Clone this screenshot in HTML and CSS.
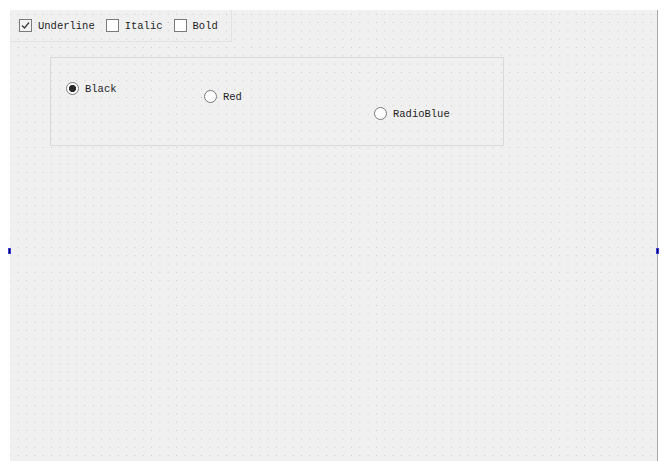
FILE: index.html
```html
<!DOCTYPE html>
<html lang="en">
  <head>
    <meta charset="UTF-8" />
    <title>Form</title>
    <link rel="stylesheet" href="styles.css">
  </head>
  <body>
    <div class="form">
      <div class="checks">
        <label class="check">
          <span class="box checked">
            <svg width="11" height="11" viewBox="0 0 11 11"><path d="M2 5.5 L4.5 8 L9 2.5" fill="none" stroke="#3c3c3c" stroke-width="1.3"/></svg>
          </span>
          <span>Underline</span>
        </label>
        <label class="check">
          <span class="box"></span>
          <span>Italic</span>
        </label>
        <label class="check">
          <span class="box"></span>
          <span>Bold</span>
        </label>
      </div>

      <div class="frame">
        <label class="radio radio-black"><span class="dot on"></span><span>Black</span></label>
        <label class="radio radio-red"><span class="dot"></span><span>Red</span></label>
        <label class="radio radio-blue"><span class="dot"></span><span>RadioBlue</span></label>
      </div>

      <span class="handle handle-left"></span>
      <span class="handle handle-right"></span>
    </div>
  </body>
</html>
```

FILE: styles.css
```css
/* Designer canvas */
body {
  margin: 0;
  padding: 10px 0 0 10px;
  background: #ffffff;
  overflow: hidden;
  height: 461px;
  box-sizing: border-box;
  font-family: "Liberation Mono", "DejaVu Sans Mono", monospace;
  font-size: 10.5px;
  color: #1e1e1e;
}

.form {
  position: relative;
  width: 647px;
  height: 460px;
  border-right: 1px solid #a8a8a8;
  background-color: #f0f0f0;
  background-image: radial-gradient(circle, #c2c2c2 0.5px, transparent 0.9px);
  background-size: 8.33px 8.33px;
  background-position: -4.2px 0;
}

/* Checkbox row */
.checks {
  display: inline-flex;
  align-items: center;
  gap: 11px;
  height: 31px;
  padding: 0 13px 0 9px;
  border-right: 1px solid #e2e2e2;
  border-bottom: 1px solid #e2e2e2;
}

.check {
  display: flex;
  align-items: center;
  gap: 6px;
}

.box {
  width: 11px;
  height: 11px;
  border: 1px solid #7a7a7a;
  background: #ffffff;
  display: flex;
  align-items: center;
  justify-content: center;
}

.box.checked {
  background: #f4f4f4;
}

/* Radio frame */
.frame {
  position: relative;
  width: 452px;
  height: 87px;
  margin: 15px 0 0 40px;
  border: 1px solid #d9d9d9;
}

.radio {
  position: absolute;
  display: flex;
  align-items: center;
  gap: 6px;
}

.radio-black { left: 15px; top: 24px; }
.radio-red { left: 153px; top: 32px; }
.radio-blue { left: 323px; top: 49px; }

.dot {
  width: 11px;
  height: 11px;
  border: 1px solid #7a7a7a;
  border-radius: 50%;
  background: #ffffff;
  box-sizing: content-box;
}

.dot.on {
  background: radial-gradient(circle, #2a2a2a 3.3px, #ffffff 3.9px);
}

/* Resize handles */
.handle {
  position: absolute;
  top: 238px;
  width: 1px;
  height: 4px;
  background: #000050;
  border: 1px solid #3a3ad8;
}

.handle-left { left: -2px; }
.handle-right { left: 646px; }
```
